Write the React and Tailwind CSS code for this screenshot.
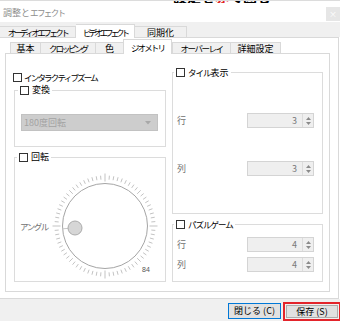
import React from 'react';

const jp = "font-['Noto_Sans_CJK_JP','Noto_Sans',sans-serif]";

// kana runs are narrower in the original UI font
function K({ children, t = 'tracking-[-2px]' }) {
  return <span className={`text-[8.5px] ${t}`}>{children}</span>;
}

function Box() {
  return <span className="block w-[9px] h-[9px] border border-[#333333] bg-white shrink-0" />;
}

function Legend({ children, className = '' }) {
  return (
    <legend className={`px-[2px] ${className}`}>
      <span className="flex items-center gap-[3px] h-[12px] leading-[12px]">
        <Box />
        <span className="whitespace-nowrap">{children}</span>
      </span>
    </legend>
  );
}

function Spin({ value }) {
  return (
    <div className="w-[67px] h-[15px] bg-[#efefef] border border-[#d4d4d4] flex">
      <div className="flex-1 text-right pr-[5px] leading-[13px] text-[#7a7a7a]">{value}</div>
      <div className="w-[11px] border-l border-[#dcdcdc] flex flex-col items-center justify-center gap-[2px]">
        <svg width="5" height="3" viewBox="0 0 5 3"><path d="M0 3 L2.5 0 L5 3 Z" fill="#8a8a8a" /></svg>
        <svg width="5" height="3" viewBox="0 0 5 3"><path d="M0 0 L2.5 3 L5 0 Z" fill="#8a8a8a" /></svg>
      </div>
    </div>
  );
}

function Dial() {
  const ticks = Array.from({ length: 72 }, (_, i) => i * 5);
  return (
    <svg width="112" height="112" viewBox="-56 -56 112 112">
      {ticks.map(a => {
        const rad = (a * Math.PI) / 180;
        const r1 = a % 90 === 0 ? 44.5 : a % 45 === 0 ? 45.5 : 46.5;
        const r2 = a % 90 === 0 ? 52.5 : 50.5;
        return (
          <line
            key={a}
            x1={r1 * Math.sin(rad)}
            y1={-r1 * Math.cos(rad)}
            x2={r2 * Math.sin(rad)}
            y2={-r2 * Math.cos(rad)}
            stroke="#b4b4b4"
            strokeWidth="0.8"
          />
        );
      })}
      <circle r="42.5" fill="white" stroke="#a5a5a5" strokeWidth="1" />
      <line x1="-37" y1="2.4" x2="-42.4" y2="2.8" stroke="#c8c8c8" strokeWidth="1" />
      <circle cx="-30" cy="2" r="7" fill="#d6d6d6" stroke="#ababab" strokeWidth="1" />
      <text x="37" y="46" fontSize="7" fill="#555555" fontFamily="Liberation Sans, sans-serif">84</text>
    </svg>
  );
}

export default function App() {
  const subTabs = [
    { label: '基本', w: 'w-[30px]' },
    { label: <K t="tracking-[-2.2px]">クロッピング</K>, key: 'crop', w: 'w-[55px]' },
    { label: '色', w: 'w-[28px]' },
    { label: <K t="tracking-[-1.9px]">ジオメトリ</K>, key: 'geo', w: 'w-[49px]', active: true },
    { label: <K t="tracking-[-1.5px]">オーバーレイ</K>, key: 'ovl', w: 'w-[58px]' },
    { label: '詳細設定', w: 'w-[51px]', last: true },
  ];

  return (
    <div className={`w-[340px] h-[321px] overflow-hidden bg-white flex flex-col text-[9px] text-black ${jp}`}>
      {/* clipped heading above the window */}
      <div className="h-[3px] shrink-0 border-t border-[#dcdcdc] overflow-hidden">
        <div className="pl-[173px] -translate-y-[12px] text-[14px] leading-[14px] font-bold whitespace-nowrap">
          設定を<span className="text-[#e02020]">赤</span>で囲む
        </div>
      </div>

      {/* title bar */}
      <div className="h-[19px] shrink-0 flex justify-between items-start">
        <div className="mt-[3px] ml-[3px] leading-[12px] text-[#8e8e8e] whitespace-nowrap">
          調整と<K t="tracking-[-1.6px]">エフェクト</K>
        </div>
        <div className="mt-[4px] w-[14px] h-[14px] bg-[#e6e6e6] flex items-center justify-center text-[8px] text-white">×</div>
      </div>

      {/* main tabs */}
      <div className="h-[15px] shrink-0 bg-[#f0f0f0] flex items-end">
        <div className="w-[76px] h-[11px] border-t border-r border-[#d9d9d9] flex items-center justify-center leading-[11px] whitespace-nowrap">
          <K t="tracking-[-2.5px]">オーディオエフェクト</K>
        </div>
        <div className="relative z-10 -mb-[1px] w-[59px] h-[14px] bg-white border-t border-r border-[#d9d9d9] flex items-center justify-center leading-[12px] whitespace-nowrap">
          <K t="tracking-[-3px]">ビデオエフェクト</K>
        </div>
        <div className="w-[52px] h-[11px] border-t border-r border-[#d9d9d9] flex items-center justify-center leading-[11px]">同期化</div>
      </div>

      {/* main panel */}
      <div className="w-[339px] h-[262px] shrink-0 bg-white border-t border-r border-b border-[#d9d9d9] flex flex-col">
        {/* sub tabs */}
        <div className="h-[15px] shrink-0 pl-[10px] flex items-end">
          {subTabs.map(t => (
            <div
              key={t.key || t.label}
              className={`${t.w} flex items-center justify-center whitespace-nowrap border-t border-l border-[#d9d9d9] ${t.last || t.active ? 'border-r' : ''} ${
                t.active ? 'relative z-10 -mb-[1px] h-[15px] bg-white' : 'h-[11px] bg-[#f0f0f0]'
              } leading-[11px]`}
            >
              {t.label}
            </div>
          ))}
        </div>

        {/* sub panel */}
        <div className="ml-[5px] w-[325px] h-[239px] border border-[#d9d9d9] grid grid-cols-[152px_151px] gap-x-[6px] pl-[8px]">
          {/* left column */}
          <div className="flex flex-col">
            <div className="mt-[17px] -ml-[1px] h-[12px] flex items-center gap-[2px]">
              <Box />
              <span className="leading-[12px] whitespace-nowrap"><K t="tracking-[-1.8px]">インタラクティブズーム</K></span>
            </div>

            <fieldset className="mt-[1px] h-[63px] border border-[#dcdcdc]">
              <Legend className="ml-[3px]">変換</Legend>
              <div className="mt-[18px] ml-[6px] w-[137px] h-[17px] bg-[#cdcdcd] border border-[#c2c2c2] flex items-center justify-between pl-[2px] pr-[6px]">
                <span className="text-[#a3a3a3] leading-[15px]">180度回転</span>
                <svg width="6" height="4" viewBox="0 0 6 4"><path d="M0 0 L3 3.5 L6 0 Z" fill="#a8a8a8" /></svg>
              </div>
            </fieldset>

            <fieldset className="mt-[4px] h-[131px] border border-[#dcdcdc]">
              <Legend className="ml-[2px]">回転</Legend>
              <div className="mt-[7px] pl-[5px] flex items-center">
                <span className="w-[29px] leading-[12px] text-[#6f6f6f] whitespace-nowrap"><K t="tracking-[-1.5px]">アングル</K></span>
                <Dial />
              </div>
            </fieldset>
          </div>

          {/* right column */}
          <div className="flex flex-col">
            <fieldset className="mt-[12px] h-[148px] border border-[#dcdcdc]">
              <Legend className="ml-[1px]"><K t="tracking-[-1px]">タイル</K>表示</Legend>
              <div className="mt-[35px] pl-[4px] pr-[8px] flex items-center justify-between">
                <span className="text-[#6f6f6f]">行</span>
                <Spin value="3" />
              </div>
              <div className="mt-[33px] pl-[4px] pr-[8px] flex items-center justify-between">
                <span className="text-[#6f6f6f]">列</span>
                <Spin value="3" />
              </div>
            </fieldset>

            <fieldset className="mt-[4px] h-[64px] border border-[#dcdcdc]">
              <Legend className="ml-[1px]"><K t="tracking-[-1px]">パズルゲーム</K></Legend>
              <div className="mt-[7px] pl-[4px] pr-[8px] flex items-center justify-between">
                <span className="text-[#6f6f6f]">行</span>
                <Spin value="4" />
              </div>
              <div className="mt-[5px] pl-[4px] pr-[8px] flex items-center justify-between">
                <span className="text-[#6f6f6f]">列</span>
                <Spin value="4" />
              </div>
            </fieldset>
          </div>
        </div>
      </div>

      {/* footer */}
      <div className="flex-1 bg-[#f0f0f0] flex justify-end items-start gap-[2px]">
        <button className="mt-[4px] w-[53px] h-[16px] bg-[#e1e1e1] border border-[#0078d7] leading-[14px] whitespace-nowrap">閉じる (C)</button>
        <div className="mt-[3px] -mr-[1px] w-[58px] h-[19px] border-2 border-[#e3242b] p-[1px]">
          <div className="w-full h-full bg-[#e1e1e1] border border-[#adadad] flex items-center justify-center leading-[11px] whitespace-nowrap">保存 (S)</div>
        </div>
      </div>
    </div>
  );
}
